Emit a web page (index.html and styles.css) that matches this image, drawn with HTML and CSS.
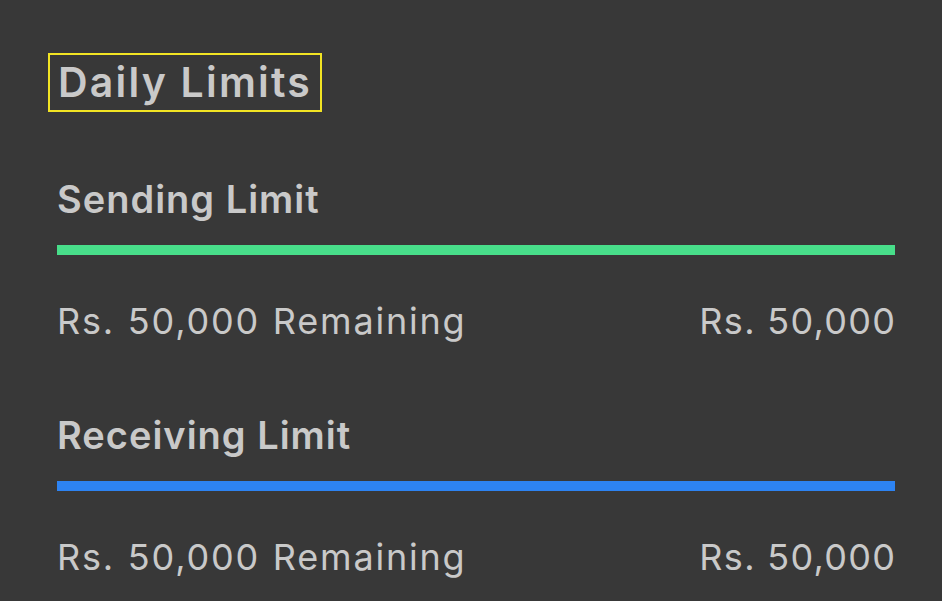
FILE: index.html
```html
<!DOCTYPE html>
<html>
<head>
<meta charset="utf-8">
<link rel="stylesheet" href="styles.css">
</head>
<body>
<main class="page">
  <h1 class="title">Daily Limits</h1>
  <section class="limit">
    <h2 class="limit-name">Sending Limit</h2>
    <div class="bar bar-green"></div>
    <div class="row"><span class="remaining">Rs. 50,000 Remaining</span><span class="total">Rs. 50,000</span></div>
  </section>
  <section class="limit">
    <h2 class="limit-name">Receiving Limit</h2>
    <div class="bar bar-blue"></div>
    <div class="row"><span class="remaining">Rs. 50,000 Remaining</span><span class="total">Rs. 50,000</span></div>
  </section>
</main>
</body>
</html>
```
FILE: styles.css
```css
html, body {
  margin: 0;
  padding: 0;
  background: #383838;
}
body {
  font-family: Inter, "Open Sans", sans-serif;
  color: #c9c9c9;
  width: 942px;
  height: 601px;
  overflow: hidden;
}
.page {
  padding: 53px 47px 0 57px;
  display: flex;
  flex-direction: column;
  align-items: stretch;
}
.title {
  align-self: flex-start;
  margin: 0 0 0 -9px;
  padding: 0 8px 0 8px;
  border: 2px solid #f2e423;
  font-size: 41px;
  font-weight: 600;
  letter-spacing: 2.2px;
  line-height: 55px;
}
.limit {
  display: flex;
  flex-direction: column;
}
.limit-name {
  margin: 0;
  font-size: 38px;
  font-weight: 600;
  letter-spacing: 1px;
  line-height: 40px;
  padding-top: 67px;
}
.limit + .limit .limit-name {
  padding-top: 74px;
}
.bar {
  height: 10px;
  margin-top: 26px;
}
.bar-green { background: #48de8a; }
.bar-blue { background: #2d83f2; }
.row {
  display: flex;
  justify-content: space-between;
  font-size: 36px;
  font-weight: 400;
  line-height: 40px;
  margin-top: 46px;
}
.remaining {
  letter-spacing: 1.8px;
  word-spacing: 1px;
}
.total {
  letter-spacing: 1.3px;
  margin-right: -1.3px;
}
```
